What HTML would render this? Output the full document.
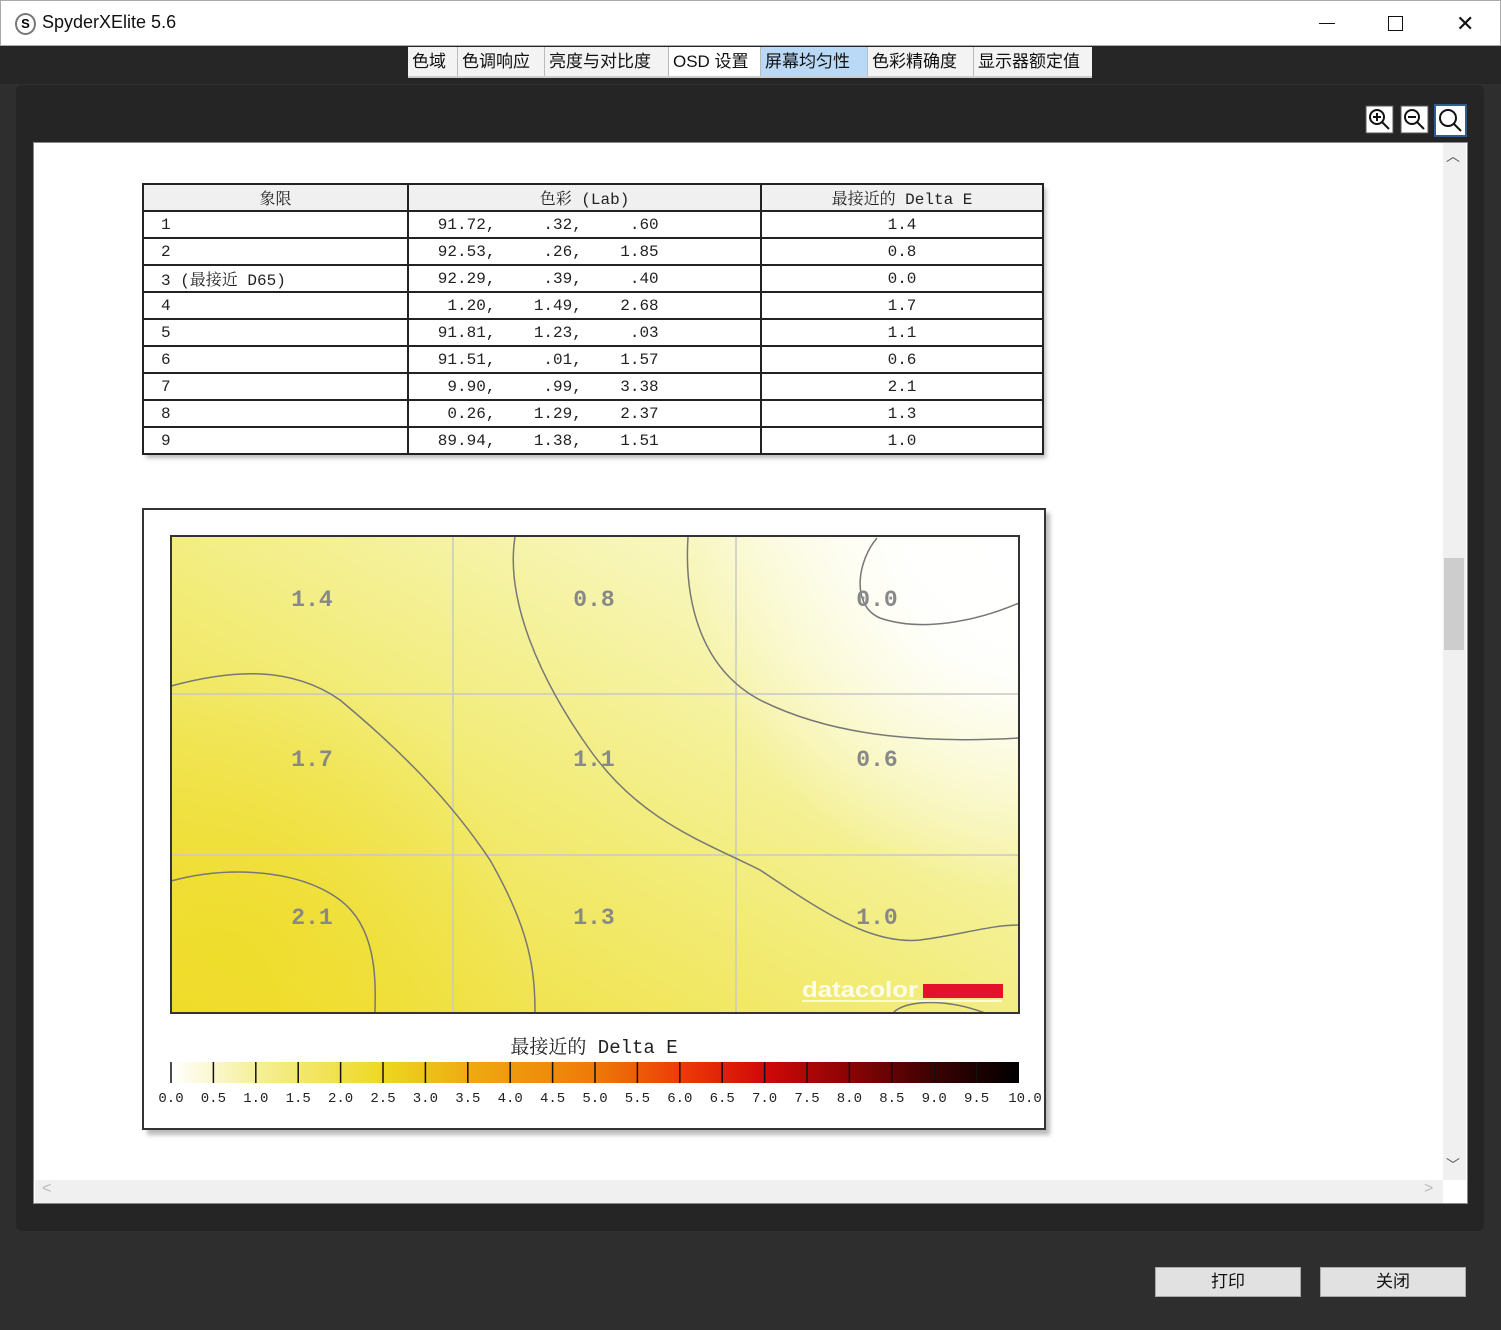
<!DOCTYPE html>
<html><head><meta charset="utf-8"><style>
*{margin:0;padding:0;box-sizing:border-box}
body{width:1501px;height:1330px;background:#2e2e2e;position:relative;overflow:hidden;font-family:"Liberation Sans","Noto Sans CJK SC",sans-serif}
.abs{position:absolute}
.title{left:0;top:0;width:1501px;height:46px;background:#fff;border:1px solid #aaa}
.tabs{left:408px;top:47px;height:31px;display:flex;background:#f0f0f0;border-bottom:2px solid #ccc}
.tab{height:29px;line-height:29px;font-size:17px;color:#111;padding:0 4px;border-right:1px solid #bbb;background:#f3f3f3}
.tab.on{background:#b9d9f7}
.mono{font-family:"Liberation Mono","Noto Serif CJK SC",monospace;font-size:16px;color:#222}
table{border-collapse:collapse}
td{border:2px solid #222;height:27px;padding:0}
.btn{background:#e1e1e1;border:1px solid #aaa;font-size:17px;text-align:center;line-height:28px;color:#111}
</style></head><body>
<div class="abs title">
 <div class="abs" style="left:14px;top:12px;width:21px;height:22px;border-radius:50%;border:2px solid #777;font-size:13px;font-weight:bold;text-align:center;line-height:18px">S</div>
 <div class="abs" style="left:41px;top:11px;font-size:18px;color:#111">SpyderXElite 5.6</div>
 <div class="abs" style="left:1318px;top:22px;width:16px;height:1px;background:#111"></div>
 <div class="abs" style="left:1387px;top:15px;width:15px;height:15px;border:1px solid #111"></div>
 <div class="abs" style="left:1455px;top:12px;font-size:22px;color:#111;line-height:22px">✕</div>
</div>
<div class="abs" style="left:0;top:46px;width:1501px;height:38px;background:#262626"></div>
<div class="abs" style="left:16px;top:85px;width:1468px;height:1146px;background:#252525;border-radius:6px"></div>
<div class="abs tabs" style="width:684px">
 <div class="tab" style="width:50px">色域</div><div class="tab" style="width:87px">色调响应</div><div class="tab" style="width:124px">亮度与对比度</div><div class="tab" style="width:92px;background:#fff">OSD 设置</div><div class="tab on" style="width:107px">屏幕均匀性</div><div class="tab" style="width:106px">色彩精确度</div><div class="tab" style="width:118px;border-right:none">显示器额定值</div>
</div>
<svg class="abs" style="left:1364px;top:104px" width="106" height="34">
 <g fill="#fff" stroke="#555"><rect x="2" y="2" width="27" height="27"/><rect x="37" y="2" width="27" height="27"/></g>
 <rect x="71" y="1" width="31" height="31" fill="#fff" stroke="#2c5e8e" stroke-width="2"/>
 <g fill="none" stroke="#111" stroke-width="2">
  <circle cx="13" cy="13" r="7"/><path d="M18 18l7 7M9 13h8M13 9v8"/>
  <circle cx="48" cy="13" r="7"/><path d="M53 18l7 7M44 13h8"/>
  <circle cx="84" cy="14" r="8"/><path d="M90 20l7 7"/>
 </g>
</svg>
<div class="abs" style="left:33px;top:142px;width:1435px;height:1062px;background:#fff;border:1px solid #888"></div>
<div class="abs" style="left:1443px;top:143px;width:23px;height:1037px;background:#f0f0f0"></div>
<div class="abs" style="left:1444px;top:558px;width:20px;height:92px;background:#cdcdcd"></div>
<div class="abs" style="left:1446px;top:146px;color:#555;font-size:14px">︿</div>
<div class="abs" style="left:1446px;top:1155px;color:#555;font-size:14px">﹀</div>
<div class="abs" style="left:35px;top:1180px;width:1408px;height:23px;background:#f0f0f0"></div>
<div class="abs" style="left:42px;top:1180px;color:#bbb;font-size:16px">&lt;</div>
<div class="abs" style="left:1424px;top:1180px;color:#bbb;font-size:16px">&gt;</div>
<div class="abs" style="left:146px;top:188px;width:900px;height:270px;background:#bbb;filter:blur(2px)"></div>
<table class="abs mono" style="left:142px;top:183px;width:902px;background:#fff">
<tr style="background:#f0f0f0"><td style="width:265px;text-align:center">象限</td><td style="width:353px;text-align:center">色彩 (Lab)</td><td style="text-align:center">最接近的 Delta E</td></tr>
<tr><td style="padding-left:17px">1</td><td><pre class="mono">   91.72,     .32,     .60</pre></td><td style="text-align:center">1.4</td></tr>
<tr><td style="padding-left:17px">2</td><td><pre class="mono">   92.53,     .26,    1.85</pre></td><td style="text-align:center">0.8</td></tr>
<tr><td style="padding-left:17px">3 (最接近 D65)</td><td><pre class="mono">   92.29,     .39,     .40</pre></td><td style="text-align:center">0.0</td></tr>
<tr><td style="padding-left:17px">4</td><td><pre class="mono">    1.20,    1.49,    2.68</pre></td><td style="text-align:center">1.7</td></tr>
<tr><td style="padding-left:17px">5</td><td><pre class="mono">   91.81,    1.23,     .03</pre></td><td style="text-align:center">1.1</td></tr>
<tr><td style="padding-left:17px">6</td><td><pre class="mono">   91.51,     .01,    1.57</pre></td><td style="text-align:center">0.6</td></tr>
<tr><td style="padding-left:17px">7</td><td><pre class="mono">    9.90,     .99,    3.38</pre></td><td style="text-align:center">2.1</td></tr>
<tr><td style="padding-left:17px">8</td><td><pre class="mono">    0.26,    1.29,    2.37</pre></td><td style="text-align:center">1.3</td></tr>
<tr><td style="padding-left:17px">9</td><td><pre class="mono">   89.94,    1.38,    1.51</pre></td><td style="text-align:center">1.0</td></tr>
</table>
<div class="abs" style="left:147px;top:513px;width:903px;height:622px;background:#bbb;filter:blur(2px)"></div>
<div class="abs" style="left:142px;top:508px;width:904px;height:622px;background:#fff;border:2px solid #333"></div>
<svg class="abs" style="left:0;top:0" width="1501" height="1330">
<defs>
 <linearGradient id="g" x1="0" y1="1" x2="1" y2="0">
  <stop offset="0" stop-color="#efdc2c"/><stop offset="0.45" stop-color="#f2ec78"/><stop offset="0.8" stop-color="#f8f7c0"/><stop offset="1" stop-color="#fff"/>
 </linearGradient>
 <radialGradient id="w" cx="1019" cy="560" r="330" gradientUnits="userSpaceOnUse">
  <stop offset="0" stop-color="#fff" stop-opacity="1"/><stop offset="0.35" stop-color="#fff" stop-opacity="0.9"/><stop offset="1" stop-color="#fff" stop-opacity="0"/>
 </radialGradient>
 <radialGradient id="y" cx="230" cy="960" r="300" gradientUnits="userSpaceOnUse">
  <stop offset="0" stop-color="#efdc28" stop-opacity="0.8"/><stop offset="1" stop-color="#efdc28" stop-opacity="0"/>
 </radialGradient>
 <linearGradient id="bar" x1="0" x2="1">
  <stop offset="0" stop-color="#fff"/><stop offset="0.1" stop-color="#f5f099"/><stop offset="0.25" stop-color="#eed820"/><stop offset="0.35" stop-color="#eeab10"/><stop offset="0.5" stop-color="#ee7a08"/><stop offset="0.6" stop-color="#ee3c08"/><stop offset="0.7" stop-color="#d10808"/><stop offset="0.8" stop-color="#8a0404"/><stop offset="0.9" stop-color="#3a0202"/><stop offset="1" stop-color="#000"/>
 </linearGradient>
</defs>
<rect x="171" y="536" width="848" height="477" fill="url(#g)"/>
<rect x="171" y="536" width="848" height="477" fill="url(#y)"/>
<rect x="171" y="536" width="848" height="477" fill="url(#w)"/>
<g stroke="#c8c8c8" stroke-width="1.5"><path d="M453 536V1013M736 536V1013M171 694H1019M171 855H1019"/></g>
<g fill="none" stroke="#777" stroke-width="1.5">
 <path d="M877 538C858 560 850 605 880 618C920 632 975 622 1019 603"/>
 <path d="M688 537C684 600 700 668 760 700C820 730 900 745 1019 738"/>
 <path d="M515 537C505 600 540 680 590 750C640 820 700 840 760 870C820 910 870 945 920 940C960 935 990 925 1019 925"/>
 <path d="M171 686C230 670 290 665 340 700C400 750 450 800 490 860C530 930 535 970 535 1013"/>
 <path d="M171 881C230 865 300 870 340 900C380 930 375 990 375 1013"/>
 <path d="M893 1013C905 1000 945 998 985 1013"/>
</g>
<rect x="171" y="536" width="848" height="477" fill="none" stroke="#333" stroke-width="2"/>
<g font-family="Liberation Mono,monospace" font-size="23" font-weight="bold" fill="#888" text-anchor="middle">
 <text x="312" y="606">1.4</text><text x="594" y="606">0.8</text><text x="877" y="606">0.0</text>
 <text x="312" y="766">1.7</text><text x="594" y="766">1.1</text><text x="877" y="766">0.6</text>
 <text x="312" y="924">2.1</text><text x="594" y="924">1.3</text><text x="877" y="924">1.0</text>
</g>
<text x="802" y="997" font-family="Liberation Sans,sans-serif" font-weight="bold" font-size="22" fill="#fff" fill-opacity="0.85" textLength="116" lengthAdjust="spacingAndGlyphs">datacolor</text>
<rect x="802" y="1000" width="200" height="2" fill="#fff" fill-opacity="0.7"/>
<rect x="923" y="984" width="80" height="14" fill="#e3122a"/>
<text x="594" y="1053" text-anchor="middle" font-family="Liberation Mono,Noto Serif CJK SC,monospace" font-size="19" fill="#222">最接近的 Delta E</text>
<rect x="171" y="1062" width="848" height="21" fill="url(#bar)"/>
<g stroke="#111" stroke-width="1.5" id="ticks"></g>
<g font-family="Liberation Mono,monospace" font-size="14" fill="#222" text-anchor="middle" id="lab"></g>
</svg>
<div class="abs btn" style="left:1155px;top:1267px;width:146px;height:30px">打印</div>
<div class="abs btn" style="left:1320px;top:1267px;width:146px;height:30px">关闭</div>
<script>
var t=document.getElementById('ticks'),l=document.getElementById('lab'),ns='http://www.w3.org/2000/svg';
for(var i=0;i<=20;i++){var x=171+i*42.4;
 if(i<20){var p=document.createElementNS(ns,'path');p.setAttribute('d','M'+x+' 1062V1083');t.appendChild(p);}
 var s=document.createElementNS(ns,'text');s.setAttribute('x',x+(i==20?6:0));s.setAttribute('y',1102);s.textContent=(i/2).toFixed(1);l.appendChild(s);}
</script>
</body></html>
